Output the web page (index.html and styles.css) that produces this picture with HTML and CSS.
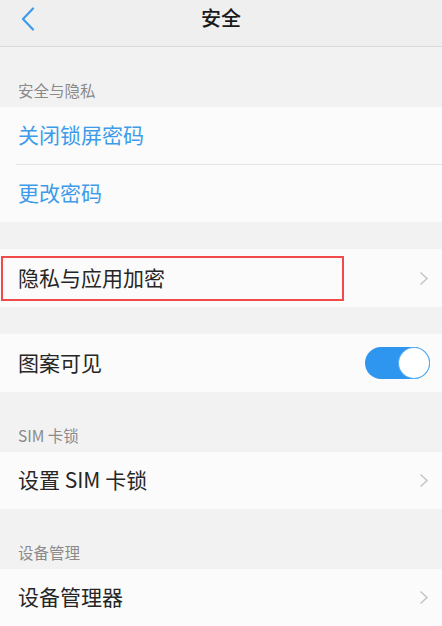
FILE: index.html
```html
<!DOCTYPE html>
<html lang="zh">
<head>
<meta charset="utf-8">
<link rel="stylesheet" href="styles.css">
</head>
<body>
<div class="page">
  <header class="topbar">
    <svg class="back" width="14" height="24" viewBox="0 0 14 24"><path d="M12 1.5 L2 12 L12 22.5" fill="none" stroke="#3d9be9" stroke-width="2.2" stroke-linecap="round" stroke-linejoin="round"/></svg>
    <h1 class="title">安全</h1>
  </header>

  <div class="label">安全与隐私</div>
  <div class="group">
    <div class="row blue"><span class="text">关闭锁屏密码</span></div>
    <div class="divider"></div>
    <div class="row blue"><span class="text">更改密码</span></div>
  </div>

  <div class="gap"></div>
  <div class="group">
    <div class="row highlighted">
      <span class="text">隐私与应用加密</span>
      <svg class="chev" width="10" height="15" viewBox="0 0 10 15"><path d="M1.5 1.5 L8 7.5 L1.5 13.5" fill="none" stroke="#c6c6c6" stroke-width="1.6"/></svg>
      <div class="mark"></div>
    </div>
  </div>

  <div class="gap"></div>
  <div class="group">
    <div class="row">
      <span class="text">图案可见</span>
      <div class="toggle"><div class="knob"></div></div>
    </div>
  </div>

  <div class="label">SIM 卡锁</div>
  <div class="group">
    <div class="row">
      <span class="text">设置 SIM 卡锁</span>
      <svg class="chev" width="10" height="15" viewBox="0 0 10 15"><path d="M1.5 1.5 L8 7.5 L1.5 13.5" fill="none" stroke="#c6c6c6" stroke-width="1.6"/></svg>
    </div>
  </div>

  <div class="label">设备管理</div>
  <div class="group">
    <div class="row">
      <span class="text">设备管理器</span>
      <svg class="chev" width="10" height="15" viewBox="0 0 10 15"><path d="M1.5 1.5 L8 7.5 L1.5 13.5" fill="none" stroke="#c6c6c6" stroke-width="1.6"/></svg>
    </div>
  </div>
</div>
</body>
</html>
```

FILE: styles.css
```css
* { box-sizing: border-box; margin: 0; padding: 0; }
html, body { width: 442px; height: 626px; overflow: hidden; }
body {
  background: #f2f2f2;
  font-family: "Noto Sans CJK SC", "Noto Sans", sans-serif;
}
.page { display: flex; flex-direction: column; }
.topbar {
  height: 47px;
  background: #efefef;
  border-bottom: 1px solid #d9d9d9;
  display: flex;
  align-items: center;
  justify-content: center;
  position: relative;
}
.back { position: absolute; left: 21px; top: 7px; }
.title {
  font-size: 20px;
  font-weight: 500;
  color: #1a1a1a;
  margin-top: -11px;
}
.label {
  height: 60px;
  display: flex;
  align-items: flex-end;
  padding: 0 0 6px 18px;
  font-size: 15.5px;
  color: #8a8a8a;
}
.group { background: #fbfbfb; }
.row {
  height: 57px;
  padding: 0 12px 0 18px;
  display: flex;
  align-items: center;
  justify-content: space-between;
  font-size: 21px;
  color: #262626;
  position: relative;
}
.text { margin-bottom: 3px; }
.row.blue { color: #3d9be9; }
.divider { height: 1px; background: #e4e4e4; margin-left: 16px; }
.gap { height: 27px; }
.gap + .group .row { height: 58px; }
.chev { margin-right: 1px; }
.mark {
  position: absolute;
  left: 1px;
  top: 7px;
  width: 343px;
  height: 45px;
  border: 2px solid #f04a4a;
}
.toggle {
  width: 65px;
  height: 32px;
  border-radius: 16px;
  background: #2e96ef;
  position: relative;
}
.knob {
  position: absolute;
  right: 1px;
  top: 1px;
  width: 30px;
  height: 30px;
  border-radius: 50%;
  background: #fff;
  box-shadow: 0 0 0 1px #5aaef2;
}
```
